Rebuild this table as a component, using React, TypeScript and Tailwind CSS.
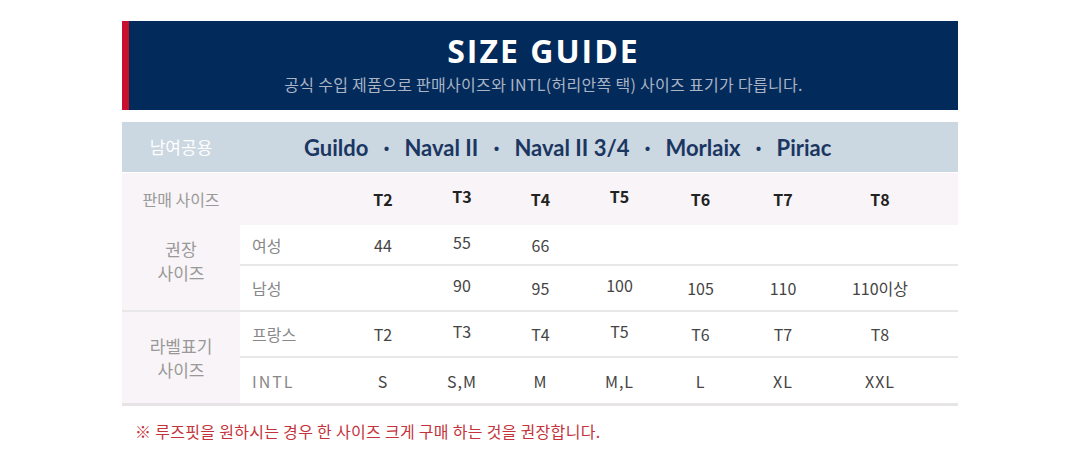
import React from "react";

const KR = "font-['Noto_Sans_CJK_KR','Noto_Sans',sans-serif]";

const widths = ["w-[80px]", "w-[78px]", "w-[79px]", "w-[79px]", "w-[83px]", "w-[82px]", "w-[112px]"];

type Cell = { t: string; up?: boolean };

function DataCells({ cells, cls }: { cells: Cell[]; cls: string }) {
  return (
    <>
      {cells.map((c, i) => (
        <div key={i} className={`${widths[i]} shrink-0 text-center ${cls} ${c.up ? "-translate-y-[3px]" : ""}`}>
          {c.t}
        </div>
      ))}
    </>
  );
}

const c = (t: string, up = false): Cell => ({ t, up });

const models = ["Guildo", "Naval II", "Naval II 3/4", "Morlaix", "Piriac"];

export default function App() {
  return (
    <div className={`w-[1080px] h-[451px] bg-white ${KR}`}>
      <div className="ml-[122px] w-[836px] pt-[21px]">
        {/* Header */}
        <div className="flex h-[89px]">
          <div className="w-[7px] bg-[#c8102e]" />
          <div className="flex-1 bg-[#022a5b] flex flex-col items-center pt-[11px]">
            <div className="font-['Open_Sans',sans-serif] font-bold text-[32px] leading-[38px] tracking-[2px] text-white">
              SIZE GUIDE
            </div>
            <div className="mt-[4px] text-[16px] leading-[20px] tracking-[0.3px] text-[#aab4c4]">
              공식 수입 제품으로 판매사이즈와 INTL(허리안쪽 택) 사이즈 표기가 다릅니다.
            </div>
          </div>
        </div>

        {/* Table */}
        <div className="mt-[12px]">
          <div className="flex h-[50px] items-center bg-[#cbd7e1]">
            <div className="w-[118px] shrink-0 text-center text-[17px] text-white">남여공용</div>
            <div className="pl-[64px] flex items-center gap-[15px] font-['Lato',sans-serif] font-bold text-[22px] text-[#1a3661] whitespace-pre">
              {models.map((m, i) => (
                <React.Fragment key={m}>
                  {i > 0 && <span>·</span>}
                  <span>{m}</span>
                </React.Fragment>
              ))}
            </div>
          </div>
          <div className="h-[1px] bg-white" />
          <div className="flex h-[52px] items-center bg-[#f8f4f7]">
            <div className="w-[118px] shrink-0 text-center text-[16px] text-[#999]">판매 사이즈</div>
            <div className="w-[103px] shrink-0" />
            <DataCells
              cls="font-bold text-[16px] text-[#222]"
              cells={[c("T2"), c("T3", true), c("T4"), c("T5", true), c("T6"), c("T7"), c("T8")]}
            />
          </div>

          {/* 권장 사이즈 */}
          <div className="flex">
            <div className="w-[118px] shrink-0 bg-[#f8f4f7] flex items-center justify-center pb-[14px] text-[17px] leading-[24px] text-[#999] text-center">
              권장<br />사이즈
            </div>
            <div className="flex-1">
              <div className="flex h-[39px] items-center text-[16px] text-[#444]">
                <div className="w-[103px] shrink-0 pl-[12px] text-[#888]">여성</div>
                <DataCells cls="" cells={[c("44"), c("55", true), c("66"), c(""), c(""), c(""), c("")]} />
              </div>
              <div className="h-[2px] bg-[#e8e8e8]" />
              <div className="flex h-[44px] items-center text-[16px] text-[#444]">
                <div className="w-[103px] shrink-0 pl-[12px] text-[#888]">남성</div>
                <DataCells
                  cls=""
                  cells={[c(""), c("90", true), c("95"), c("100", true), c("105"), c("110"), c("110이상")]}
                />
              </div>
            </div>
          </div>
          <div className="h-[2px] bg-[#e8e8e8]" />

          {/* 라벨표기 사이즈 */}
          <div className="flex">
            <div className="w-[118px] shrink-0 bg-[#f8f4f7] flex items-center justify-center text-[17px] leading-[24px] text-[#999] text-center">
              라벨표기<br />사이즈
            </div>
            <div className="flex-1">
              <div className="flex h-[44px] items-center text-[16px] text-[#444]">
                <div className="w-[103px] shrink-0 pl-[12px] text-[#888]">프랑스</div>
                <DataCells
                  cls=""
                  cells={[c("T2"), c("T3", true), c("T4"), c("T5", true), c("T6"), c("T7"), c("T8")]}
                />
              </div>
              <div className="h-[2px] bg-[#e8e8e8]" />
              <div className="flex h-[45px] items-center text-[16px] text-[#444]">
                <div className="w-[103px] shrink-0 pl-[12px] text-[#888] tracking-[2px]">INTL</div>
                <DataCells
                  cls="tracking-[1px]"
                  cells={[c("S"), c("S,M"), c("M"), c("M,L"), c("L"), c("XL"), c("XXL")]}
                />
              </div>
            </div>
          </div>
          <div className="h-[3px] bg-[#e6e4e5]" />
        </div>

        <div className="mt-[15px] pl-[13px] text-[16px] leading-[20px] tracking-[0.3px] text-[#c4333b]">
          ※ 루즈핏을 원하시는 경우 한 사이즈 크게 구매 하는 것을 권장합니다.
        </div>
      </div>
    </div>
  );
}
